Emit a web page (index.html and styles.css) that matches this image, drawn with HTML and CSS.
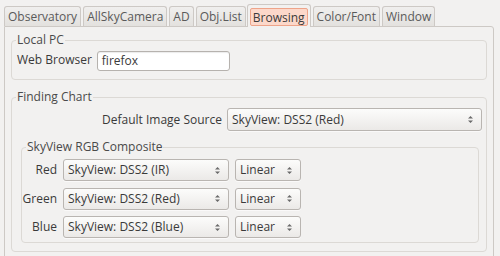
FILE: index.html
```html
<!DOCTYPE html>
<html>
<head>
<meta charset="utf-8">
<link rel="stylesheet" href="styles.css">
</head>
<body>
<div class="win">
  <div class="tabs">
    <div class="tab">Observatory</div>
    <div class="tab">AllSkyCamera</div>
    <div class="tab">AD</div>
    <div class="tab">Obj.List</div>
    <div class="tab active"><span class="focus">Browsing</span></div>
    <div class="tab">Color/Font</div>
    <div class="tab">Window</div>
  </div>
  <div class="panel">
    <fieldset class="frame local">
      <legend>Local PC</legend>
      <div class="row">
        <span class="lbl">Web Browser</span>
        <div class="entry">firefox</div>
      </div>
    </fieldset>
    <fieldset class="frame chart">
      <legend>Finding Chart</legend>
      <div class="row src">
        <span class="lbl right">Default Image Source</span>
        <div class="combo wide">SkyView: DSS2 (Red)<svg class="spin" width="7" height="9" viewBox="0 0 7 9"><path d="M1 3.5 L3.5 1 L6 3.5 Z M1 5.5 L3.5 8 L6 5.5 Z" fill="#6a6a6a"/></svg></div>
      </div>
      <fieldset class="frame rgb">
        <legend>SkyView RGB Composite</legend>
        <div class="grid">
          <span class="lbl right">Red</span>
          <div class="combo">SkyView: DSS2 (IR)<svg class="spin" width="7" height="9" viewBox="0 0 7 9"><path d="M1 3.5 L3.5 1 L6 3.5 Z M1 5.5 L3.5 8 L6 5.5 Z" fill="#6a6a6a"/></svg></div>
          <div class="combo">Linear<svg class="spin" width="7" height="9" viewBox="0 0 7 9"><path d="M1 3.5 L3.5 1 L6 3.5 Z M1 5.5 L3.5 8 L6 5.5 Z" fill="#6a6a6a"/></svg></div>
          <span class="lbl right">Green</span>
          <div class="combo">SkyView: DSS2 (Red)<svg class="spin" width="7" height="9" viewBox="0 0 7 9"><path d="M1 3.5 L3.5 1 L6 3.5 Z M1 5.5 L3.5 8 L6 5.5 Z" fill="#6a6a6a"/></svg></div>
          <div class="combo">Linear<svg class="spin" width="7" height="9" viewBox="0 0 7 9"><path d="M1 3.5 L3.5 1 L6 3.5 Z M1 5.5 L3.5 8 L6 5.5 Z" fill="#6a6a6a"/></svg></div>
          <span class="lbl right">Blue</span>
          <div class="combo">SkyView: DSS2 (Blue)<svg class="spin" width="7" height="9" viewBox="0 0 7 9"><path d="M1 3.5 L3.5 1 L6 3.5 Z M1 5.5 L3.5 8 L6 5.5 Z" fill="#6a6a6a"/></svg></div>
          <div class="combo">Linear<svg class="spin" width="7" height="9" viewBox="0 0 7 9"><path d="M1 3.5 L3.5 1 L6 3.5 Z M1 5.5 L3.5 8 L6 5.5 Z" fill="#6a6a6a"/></svg></div>
        </div>
      </fieldset>
    </fieldset>
  </div>
</div>
</body>
</html>
```
FILE: styles.css
```css
html, body {
  margin: 0;
  padding: 0;
  background: #f2f1f0;
  width: 500px;
  height: 256px;
  overflow: hidden;
}
body {
  font-family: "Open Sans", "DejaVu Sans", sans-serif;
  font-size: 12px;
  color: #3a3a3a;
}
.win {
  padding: 4px 6px 0 4px;
}
.tabs {
  display: flex;
  align-items: flex-end;
  height: 22px;
  position: relative;
  z-index: 1;
}
.tab {
  height: 20px;
  box-sizing: border-box;
  padding: 0 3px;
  margin-right: 2px;
  border: 1px solid #cdc9c5;
  border-bottom: none;
  border-radius: 3px 3px 0 0;
  background: linear-gradient(#f0efee, #e3e1de);
  color: #5a5a5a;
  display: flex;
  align-items: center;
  line-height: 16px;
}
.tab.active {
  padding: 2px 2px 0 2px;
  background: #f2f1f0;
  margin-bottom: -1px;
  margin-left: -1px;
  height: 23px;
  align-items: flex-start;
}
.focus {
  display: block;
  margin-top: 1px;
  padding: 0 2px;
  height: 18px;
  line-height: 17px;
  box-sizing: border-box;
  border: 1px solid #eea48a;
  border-radius: 2px;
  background: #fcd8ca;
  color: #3a3a3a;
}
.panel {
  border: 1px solid #cdc9c5;
  border-radius: 0 3px 0 0;
  padding: 5px 6px 4px 6px;
  height: 240px;
  box-sizing: border-box;
}
.frame {
  margin: 0;
  border: 1px solid #dcd9d5;
  border-radius: 4px;
  padding: 0 5px;
  min-width: 0;
}
legend {
  padding: 0 1px;
  margin-left: -1px;
  color: #4a4a4a;
  line-height: 16px;
}
.local {
  padding-bottom: 8px;
}
.row {
  display: flex;
  align-items: center;
}
.lbl {
  margin-right: 5px;
  line-height: 16px;
}
.entry {
  width: 133px;
  height: 20px;
  box-sizing: border-box;
  background: #fff;
  border: 1px solid #b6b2ae;
  border-radius: 3px;
  box-shadow: inset 0 1px 1px rgba(0,0,0,0.08);
  padding: 0 4px;
  line-height: 18px;
  margin-top: 3px;
}
.chart {
  margin-top: 9px;
  padding: 0 4px 8px 5px;
}
.src {
  justify-content: flex-end;
  padding-top: 3px;
}
.combo {
  position: relative;
  height: 22px;
  box-sizing: border-box;
  border: 1px solid #b9b5b1;
  border-radius: 3px;
  background: linear-gradient(#fcfcfb, #ebe9e7);
  box-shadow: 0 1px 0 rgba(255,255,255,0.6);
  padding: 0 20px 0 4px;
  line-height: 20px;
  white-space: nowrap;
}
.combo.wide {
  width: 255px;
  height: 23px;
  line-height: 21px;
}
.spin {
  position: absolute;
  right: 7px;
  top: 50%;
  margin-top: -4.5px;
}
.rgb {
  margin: 8px 3px 0 4px;
  padding: 4px 5px 4px 5px;
}
.grid {
  display: grid;
  grid-template-columns: 30px 166px 66px;
  column-gap: 6px;
  row-gap: 6.5px;
  align-items: center;
}
.right {
  text-align: right;
}
.grid .lbl {
  margin-right: 0;
  justify-self: end;
  white-space: nowrap;
}
```
